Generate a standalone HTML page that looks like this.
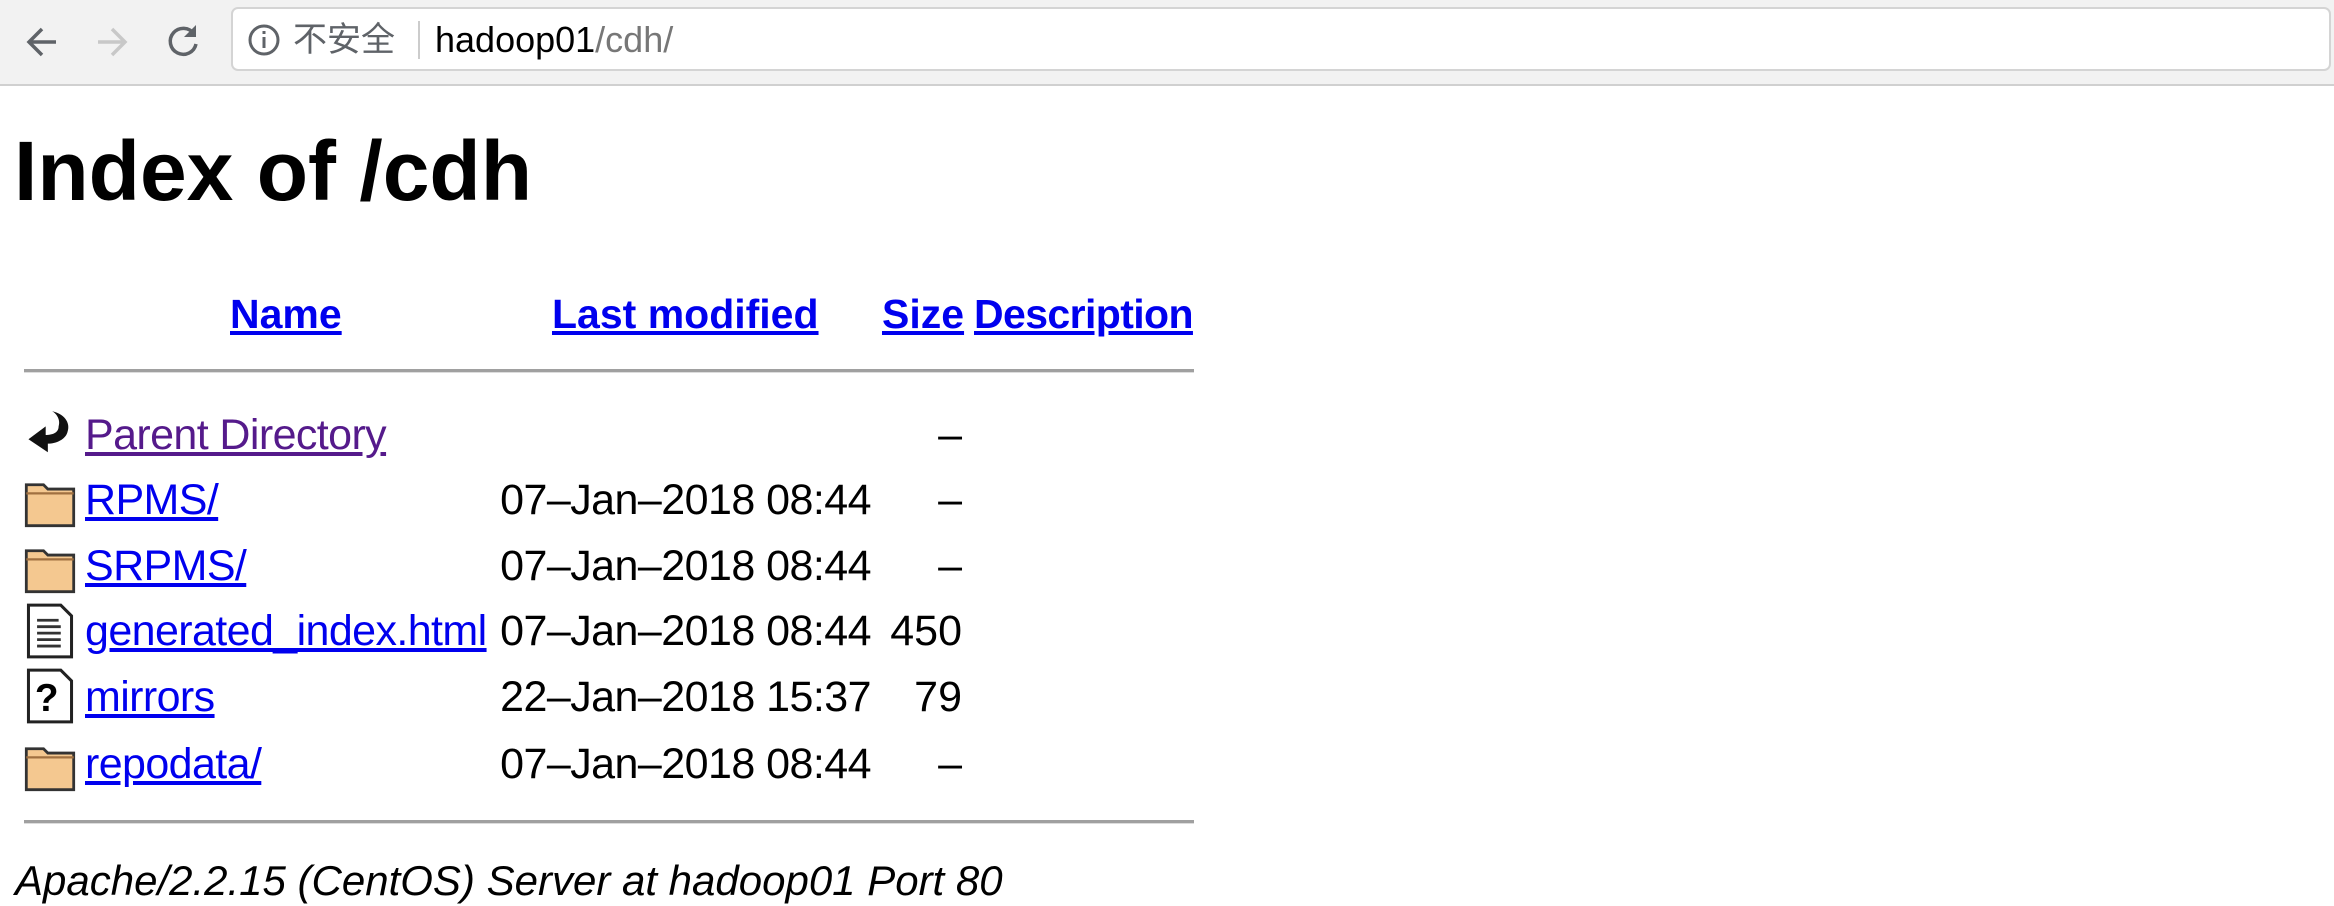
<!DOCTYPE html>
<html><head><meta charset="utf-8"><style>
body{margin:0;width:2334px;height:906px;overflow:hidden;background:#fff;font-family:"Liberation Sans",Arial,sans-serif;position:relative}
.tb{position:absolute;left:0;top:0;width:2334px;height:86px;background:#f2f2f2;border-bottom:2px solid #d0d0d0;box-sizing:border-box}
.addr{position:absolute;left:231px;top:7px;width:2100px;height:64px;background:#fff;border:2px solid #d4d4d4;border-radius:7px;box-sizing:border-box}
.a{position:absolute;white-space:nowrap}
a{color:#0000ee;text-decoration:underline}
.t{font-size:43px;line-height:44px;color:#000}
.n{letter-spacing:-0.6px}
.d{right:1463px;text-align:right;letter-spacing:-0.55px}
.s{right:1372px;text-align:right}
.hr{position:absolute;left:24px;width:1170px;height:3px;background:#a0a0a0;border-bottom:1px solid #ddd}
.ic{position:absolute;left:22px;width:56px;height:56px}
</style></head><body>
<div class="tb">
<svg class="a" style="left:22px;top:22px" width="40" height="40" viewBox="0 0 40 40"><path d="M34 20H8M20 7L7 20l13 13" stroke="#5f6368" stroke-width="3.5" fill="none"/></svg>
<svg class="a" style="left:92px;top:22px" width="40" height="40" viewBox="0 0 40 40"><path d="M6 20h26M20 7l13 13-13 13" stroke="#c8c8c8" stroke-width="3.5" fill="none"/></svg>
<svg class="a" style="left:163px;top:20px" width="40" height="40" viewBox="0 0 40 40"><path d="M31 14A13 13 0 1 0 33 24" stroke="#5f6368" stroke-width="3.5" fill="none"/><path d="M33 5v12H21z" fill="#5f6368"/></svg>
<div class="addr">
<svg class="a" style="left:14px;top:14px" width="34" height="34" viewBox="0 0 34 34"><circle cx="17" cy="17" r="14" stroke="#5f6368" stroke-width="3" fill="none"/><rect x="15.5" y="14" width="3" height="11" fill="#5f6368"/><rect x="15.5" y="8" width="3" height="3" fill="#5f6368"/></svg>
<div class="a" style="left:60px;top:12px;font-size:34px;line-height:38px;color:#5f6368;font-family:'Liberation Sans','Noto Sans CJK SC',sans-serif">不安全</div>
<div class="a" style="left:185px;top:12px;width:2px;height:38px;background:#ccc"></div>
<div class="a" style="left:202px;top:10px;font-size:36px;line-height:42px;color:#000">hadoop01<span style="color:#777">/cdh/</span></div>
</div>
</div>
<div class="a" style="left:14px;top:126px;font-size:84px;line-height:90px;font-weight:bold">Index of /cdh</div>
<div class="a t" style="left:230px;top:292px;font-weight:bold;font-size:41px"><a href="#">Name</a></div>
<div class="a t" style="left:552px;top:292px;font-weight:bold;font-size:41px"><a href="#">Last modified</a></div>
<div class="a t" style="left:882px;top:292px;font-weight:bold;font-size:41px"><a href="#">Size</a></div>
<div class="a t" style="left:974px;top:292px;font-weight:bold;font-size:41px;letter-spacing:-0.6px"><a href="#">Description</a></div>
<div class="hr" style="top:369px"></div>

<svg class="ic" style="top:407px" viewBox="0 0 26 26"><path d="M14 2c5 1 9 5 7 10-1 3-5 5-9 5l0 4-9-6 8-6v4c3 0 6-1 6-4 1-3-1-6-3-7z" fill="#111"/></svg>
<div class="a t n" style="left:85px;top:413px"><a href="#" style="color:#551a8b">Parent Directory</a></div>
<div class="a t s" style="top:413px">–</div>

<svg class="ic" style="top:474px" viewBox="0 0 26 26"><path d="M2 5h8l2 2h12v17H2z" fill="#f4c890" stroke="#333" stroke-width="1.3"/><path d="M2 9h22" stroke="#a07040"/></svg>
<div class="a t n" style="left:85px;top:478px"><a href="#">RPMS/</a></div>
<div class="a t d" style="top:478px">07–Jan–2018 08:44</div>
<div class="a t s" style="top:478px">–</div>

<svg class="ic" style="top:540px" viewBox="0 0 26 26"><path d="M2 5h8l2 2h12v17H2z" fill="#f4c890" stroke="#333" stroke-width="1.3"/><path d="M2 9h22" stroke="#a07040"/></svg>
<div class="a t n" style="left:85px;top:544px"><a href="#">SRPMS/</a></div>
<div class="a t d" style="top:544px">07–Jan–2018 08:44</div>
<div class="a t s" style="top:544px">–</div>

<svg class="ic" style="top:603px" viewBox="0 0 26 26"><path d="M3 1h15l5 5v19H3z" fill="#fff" stroke="#222" stroke-width="1.4"/><path d="M7 8h10M7 11h11M7 14h11M7 17h11M7 20h11" stroke="#333" stroke-width="1.3"/></svg>
<div class="a t n" style="left:85px;top:609px"><a href="#">generated_index.html</a></div>
<div class="a t d" style="top:609px">07–Jan–2018 08:44</div>
<div class="a t s" style="top:609px">450</div>

<svg class="ic" style="top:668px" viewBox="0 0 26 26"><path d="M3 1h15l5 5v19H3z" fill="#fff" stroke="#222" stroke-width="1.4"/><text x="6" y="20" font-size="18" font-weight="bold" font-family="Liberation Sans">?</text></svg>
<div class="a t n" style="left:85px;top:675px"><a href="#">mirrors</a></div>
<div class="a t d" style="top:675px">22–Jan–2018 15:37</div>
<div class="a t s" style="top:675px">79</div>

<svg class="ic" style="top:738px" viewBox="0 0 26 26"><path d="M2 5h8l2 2h12v17H2z" fill="#f4c890" stroke="#333" stroke-width="1.3"/><path d="M2 9h22" stroke="#a07040"/></svg>
<div class="a t n" style="left:85px;top:742px"><a href="#">repodata/</a></div>
<div class="a t d" style="top:742px">07–Jan–2018 08:44</div>
<div class="a t s" style="top:742px">–</div>

<div class="hr" style="top:820px"></div>
<div class="a t" style="left:15px;top:859px;font-style:italic;font-size:42px">Apache/2.2.15 (CentOS) Server at hadoop01 Port 80</div>
</body></html>
